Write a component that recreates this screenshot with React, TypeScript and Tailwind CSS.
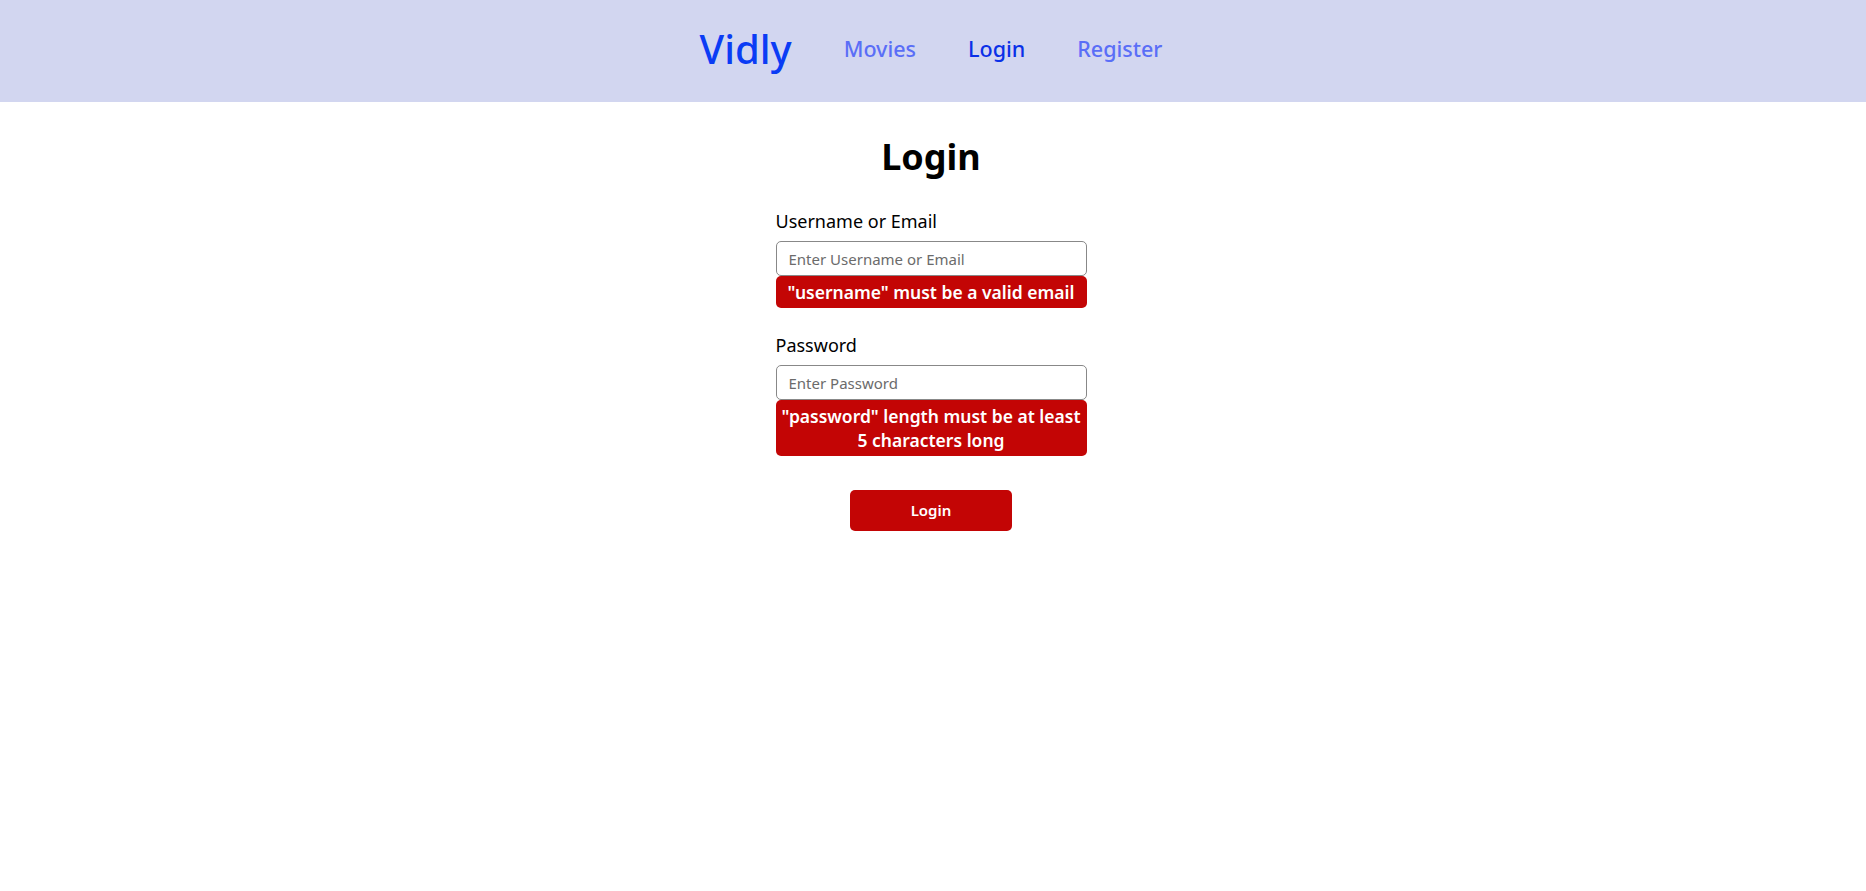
import React from "react";

export default function App() {
  const font = { fontFamily: '"Noto Sans", "Open Sans", sans-serif' };
  return (
    <div className="min-h-screen bg-white" style={font}>
      <nav className="h-[102px] bg-[#d2d6f0] flex items-center justify-center pr-[4px]">
        <div className="flex items-center gap-[52px] pb-[4px]">
          <span className="text-[40px] font-medium text-[#0b3cf5] leading-none">Vidly</span>
          <span className="text-[21.5px] font-medium text-[#5a6ef7] leading-none">Movies</span>
          <span className="text-[21.5px] font-medium text-[#0a30e8] leading-none">Login</span>
          <span className="text-[21.5px] font-medium text-[#5a6ef7] leading-none">Register</span>
        </div>
      </nav>
      <div className="flex flex-col items-center pr-[4px]">
        <h1 className="text-[36px] font-bold text-black mt-[31px] leading-[48px]">Login</h1>
        <form className="w-[311px] flex flex-col mt-[28px]" onSubmit={(e) => e.preventDefault()}>
          <label className="text-[18px] font-normal text-black leading-[24px]">Username or Email</label>
          <input
            className="mt-[8px] h-[35px] w-full border border-[#888] rounded-[5px] px-[12px] text-[15px] placeholder:text-[#6b6b6b] outline-none"
            placeholder="Enter Username or Email"
          />
          <div className="bg-[#c30505] text-white rounded-[5px] text-[17.5px] font-semibold text-center leading-[32px] h-[32px]">
            "username" must be a valid email
          </div>
          <label className="mt-[25px] text-[18px] font-normal text-black leading-[24px]">Password</label>
          <input
            type="password"
            className="mt-[8px] h-[35px] w-full border border-[#888] rounded-[5px] px-[12px] text-[15px] placeholder:text-[#6b6b6b] outline-none"
            placeholder="Enter Password"
          />
          <div className="bg-[#c30505] text-white rounded-[5px] text-[17.5px] font-semibold text-center leading-[24px] py-[4px] px-[2px]">
            "password" length must be at least 5 characters long
          </div>
          <button className="mt-[34px] self-center w-[162px] h-[41px] bg-[#c30505] text-white rounded-[5px] text-[15px] font-semibold">
            Login
          </button>
        </form>
      </div>
    </div>
  );
}
